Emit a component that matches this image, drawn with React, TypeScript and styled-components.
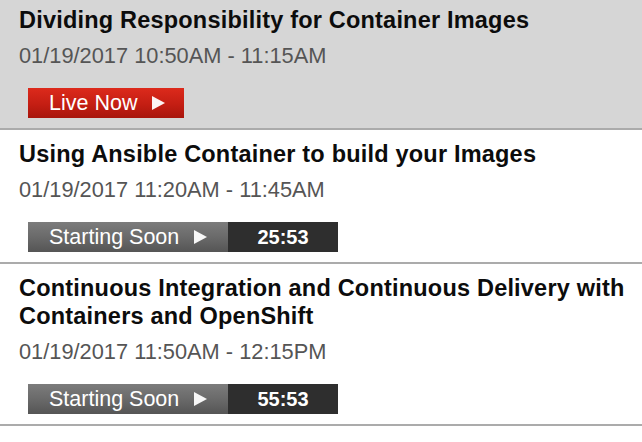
import styled, { createGlobalStyle } from "styled-components";

const GlobalStyle = createGlobalStyle`
  html, body {
    margin: 0;
    padding: 0;
    background: #fff;
    font-family: "Liberation Sans", Arial, Helvetica, sans-serif;
  }
`;

const SessionList = styled.ul`
  list-style: none;
  margin: -4px 0 0;
  padding: 0;
`;

const SessionItem = styled.li<{ $live?: boolean }>`
  background: ${(p) => (p.$live ? "#d6d6d6" : "#fff")};
  border-bottom: 2px solid #ababab;
  padding: 10px 8px 10px 19px;
`;

const SessionTitle = styled.h3`
  margin: 0;
  font-size: 23.5px;
  line-height: 28px;
  letter-spacing: 0.2px;
  font-weight: 700;
  color: #0c0c0c;
`;

const SessionTime = styled.p`
  margin: 9px 0 0;
  font-size: 21.8px;
  line-height: 26px;
  color: #555;
`;

const Actions = styled.div`
  display: flex;
  margin: 19px 0 0 9px;
  height: 30px;
`;

const StatusButton = styled.a<{ $variant: "live" | "soon" }>`
  display: flex;
  align-items: center;
  padding: 0 19px 0 21px;
  height: 30px;
  line-height: 30px;
  font-size: 21.5px;
  color: #fff;
  text-decoration: none;
  cursor: pointer;
  background: ${(p) =>
    p.$variant === "live"
      ? "linear-gradient(180deg, #dc2a1c 0%, #c41e13 55%, #a8150c 100%)"
      : "linear-gradient(180deg, #7c7c7c 0%, #6a6a6a 50%, #555 100%)"};
  min-width: ${(p) => (p.$variant === "live" ? "156px" : "200px")};
  box-sizing: border-box;
`;

const PlayMark = styled.span`
  display: inline-block;
  width: 0;
  height: 0;
  margin-left: 15px;
  border-top: 7px solid transparent;
  border-bottom: 7px solid transparent;
  border-left: 13px solid #fff;
  opacity: 0.95;
`;

const Countdown = styled.span`
  width: 110px;
  height: 30px;
  line-height: 30px;
  background: #2e2e2e;
  color: #fff;
  font-weight: 700;
  font-size: 20px;
  text-align: center;
`;

type Session = {
  title: string;
  time: string;
  live?: boolean;
  countdown?: string;
};

const sessions: Session[] = [
  {
    title: "Dividing Responsibility for Container Images",
    time: "01/19/2017 10:50AM - 11:15AM",
    live: true,
  },
  {
    title: "Using Ansible Container to build your Images",
    time: "01/19/2017 11:20AM - 11:45AM",
    countdown: "25:53",
  },
  {
    title:
      "Continuous Integration and Continuous Delivery with Containers and OpenShift",
    time: "01/19/2017 11:50AM - 12:15PM",
    countdown: "55:53",
  },
];

export default function App() {
  return (
    <>
      <GlobalStyle />
      <SessionList>
        {sessions.map((s) => (
          <SessionItem key={s.title} $live={s.live}>
            <SessionTitle>{s.title}</SessionTitle>
            <SessionTime>{s.time}</SessionTime>
            <Actions>
              {s.live ? (
                <StatusButton $variant="live">
                  Live Now
                  <PlayMark />
                </StatusButton>
              ) : (
                <>
                  <StatusButton $variant="soon">
                    Starting Soon
                    <PlayMark />
                  </StatusButton>
                  <Countdown>{s.countdown}</Countdown>
                </>
              )}
            </Actions>
          </SessionItem>
        ))}
      </SessionList>
    </>
  );
}
